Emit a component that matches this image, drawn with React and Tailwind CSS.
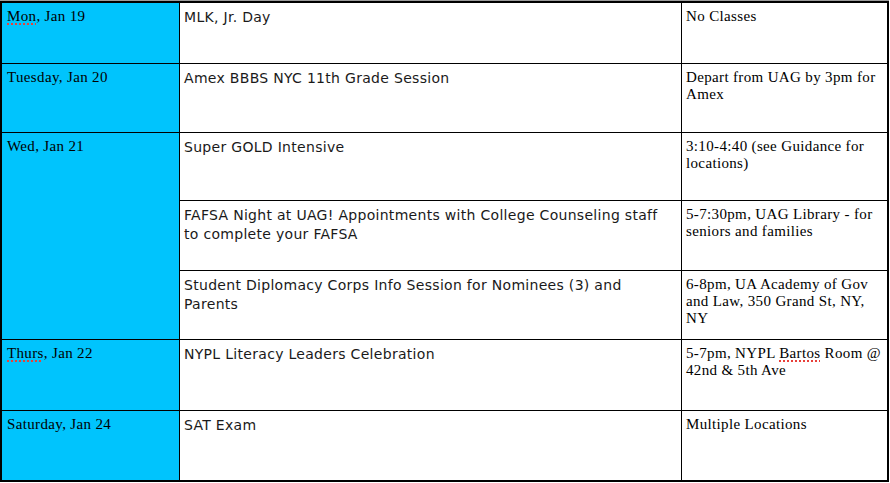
const serif = "font-['Liberation_Serif',serif] text-[15px] leading-[17px] tracking-[0.35px] text-black";
const sans = "font-['DejaVu_Sans',sans-serif] text-[14px] leading-[19px] tracking-[0.3px] text-[#1a1a1a]";

const Spell = ({ children }) => (
    <span className="underline decoration-dotted decoration-[#e8403a] decoration-[1.5px] underline-offset-[2px]">
        {children}
    </span>
);

const DateCell = ({ children, className = "" }) => (
    <div className={`bg-[#00c4fd] pl-[5px] pt-[5px] ${serif} ${className}`}>{children}</div>
);

const EventCell = ({ children }) => (
    <div className={`bg-white pl-[4px] pt-[5px] ${sans}`}>{children}</div>
);

const NoteCell = ({ children }) => (
    <div className={`bg-white pl-[4px] pt-[5px] whitespace-nowrap ${serif}`}>{children}</div>
);

export default function App() {
    return (
        <div className="w-[890px] h-[483px] bg-white">
            <div className="h-px w-[889px] bg-[#9c9c9c]" />
            <div className="w-[889px] border-2 border-black bg-black grid grid-cols-[177px_501px_205px] grid-rows-[60px_68px_67px_69px_68px_70px_69px] gap-px">
                <DateCell><Spell>Mon</Spell>, Jan 19</DateCell>
                <EventCell>MLK, Jr. Day</EventCell>
                <NoteCell>No Classes</NoteCell>

                <DateCell>Tuesday, Jan 20</DateCell>
                <EventCell>Amex BBBS NYC 11th Grade Session</EventCell>
                <NoteCell>Depart from UAG by 3pm for<br />Amex</NoteCell>

                <DateCell className="row-span-3">Wed, Jan 21</DateCell>
                <EventCell>Super GOLD Intensive</EventCell>
                <NoteCell>3:10-4:40 (see Guidance for<br />locations)</NoteCell>

                <EventCell>FAFSA Night at UAG! Appointments with College Counseling staff<br />to complete your FAFSA</EventCell>
                <NoteCell>5-7:30pm, UAG Library - for<br />seniors and families</NoteCell>

                <EventCell>Student Diplomacy Corps Info Session for Nominees (3) and<br />Parents</EventCell>
                <NoteCell>6-8pm, UA Academy of Gov<br />and Law, 350 Grand St, NY,<br />NY</NoteCell>

                <DateCell><Spell>Thurs</Spell>, Jan 22</DateCell>
                <EventCell>NYPL Literacy Leaders Celebration</EventCell>
                <NoteCell>5-7pm, NYPL <Spell>Bartos</Spell> Room @<br />42nd &amp; 5th Ave</NoteCell>

                <DateCell>Saturday, Jan 24</DateCell>
                <EventCell>SAT Exam</EventCell>
                <NoteCell>Multiple Locations</NoteCell>
            </div>
        </div>
    );
}
